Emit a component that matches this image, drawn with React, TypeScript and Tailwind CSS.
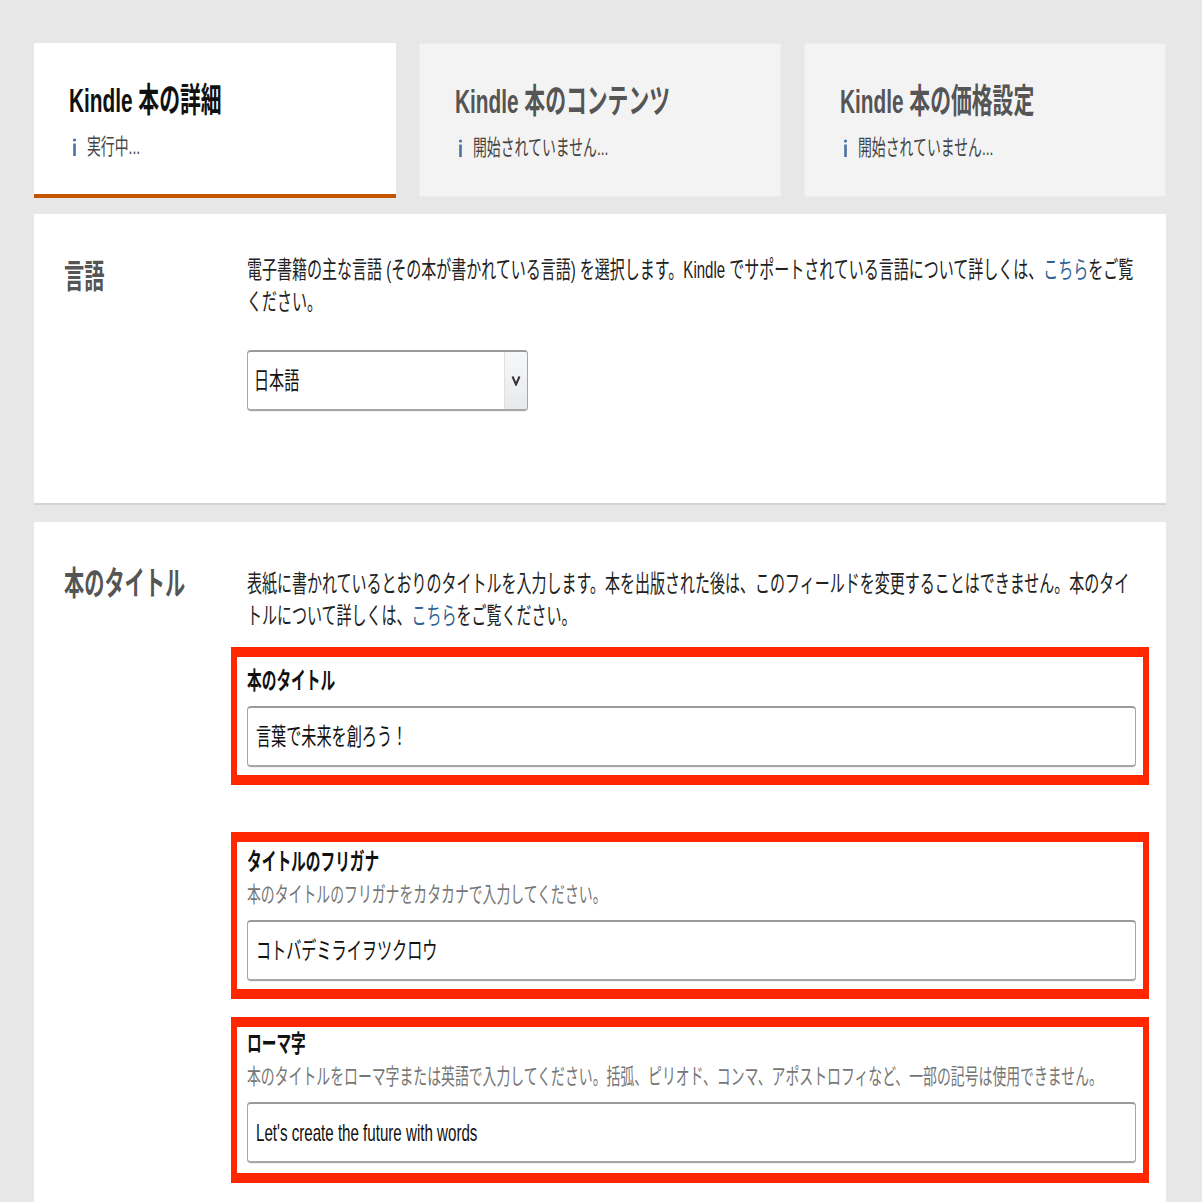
import React from "react";

// the reference is a horizontally squeezed screenshot, so text is drawn at full height and squeezed in x
function Sq({ children, className = "" }: { children: React.ReactNode; className?: string }) {
  return <div className={`origin-left scale-x-[0.625] w-[160%] ${className}`}>{children}</div>;
}

function Line({ children, className = "", bold }: { children: React.ReactNode; className?: string; bold?: boolean }) {
  const squeeze = bold ? "scale-x-[0.612]" : "scale-x-[0.63]";
  return <div className={`origin-left ${squeeze} whitespace-nowrap ${className}`}>{children}</div>;
}

function InfoIcon() {
  return (
    <svg width="5" height="18" viewBox="0 0 5 18" className="shrink-0">
      <circle cx="2.5" cy="2" r="1.6" fill="#4a72a2" />
      <rect x="1.2" y="5.5" width="2.6" height="12.5" fill="#4a72a2" />
    </svg>
  );
}

function Tab({ title, status, active }: { title: string; status: string; active?: boolean }) {
  return (
    <div
      className={
        active
          ? "h-[155px] bg-white border-b-[4px] border-[#c45500] pl-[35px] pt-[37px]"
          : "h-[154px] bg-[#f3f3f3] border border-[#ececec] pl-[35px] pt-[37px]"
      }
    >
      <Line bold className={`text-[34px] leading-[40px] font-bold ${active ? "text-[#111]" : "text-[#555]"}`}>
        {title}
      </Line>
      <div className="mt-[13px] pl-[3px] flex items-center gap-[10px]">
        <InfoIcon />
        <Line className="text-[22px] leading-[28px] text-[#444]">{status}</Line>
      </div>
    </div>
  );
}

function FieldInput({ value }: { value: string }) {
  return (
    <div className="h-[61px] rounded-[4px] border border-[#a6a6a6] border-t-2 border-b-2 border-t-[#9a9a9a] shadow-[0_1px_0_rgba(0,0,0,0.06)] pl-[8px] flex items-center bg-white">
      <Line className="text-[24px] leading-[30px] text-[#111]">{value}</Line>
    </div>
  );
}

const link = "text-[#2f6396]";

export default function App() {
  return (
    <div className="min-h-screen bg-[#e7e7e7] pl-[34px] pr-[36px] pt-[43px] font-['Liberation_Sans','Noto_Sans_CJK_JP',sans-serif] overflow-hidden">
      {/* Steps */}
      <div className="grid grid-cols-3 gap-[23px]">
        <Tab title="Kindle 本の詳細" status="実行中..." active />
        <Tab title="Kindle 本のコンテンツ" status="開始されていません..." />
        <Tab title="Kindle 本の価格設定" status="開始されていません..." />
      </div>

      {/* Language */}
      <div className="mt-[16px] h-[291px] bg-white border-b-2 border-[#d4d4d4] flex">
        <div className="w-[213px] shrink-0 pl-[30px] pt-[43px]">
          <Line bold className="text-[33px] leading-[40px] font-bold text-[#555]">言語</Line>
        </div>
        <div className="flex-1 min-w-0 pr-[30px] pt-[40px]">
          <Sq className="text-[24px] leading-[32px] text-[#222] whitespace-nowrap">
            電子書籍の主な言語 (その本が書かれている言語) を選択します。Kindle でサポートされている言語について詳しくは、
            <span className={link}>こちら</span>をご覧
            <br />
            ください。
          </Sq>
          <div className="mt-[32px] w-[281px] h-[61px] flex rounded-[4px] border border-[#a6a6a6] border-t-2 border-b-2 border-t-[#9a9a9a] shadow-[0_1px_0_rgba(0,0,0,0.06)] overflow-hidden">
            <div className="flex-1 min-w-0 pl-[6px] flex items-center">
              <Line className="text-[24px] leading-[30px] text-[#111]">日本語</Line>
            </div>
            <div className="w-[23px] bg-gradient-to-b from-[#f7f8fa] to-[#e7e9ec] border-l border-[#e0e0e0] flex items-center justify-center">
              <svg width="10" height="11" viewBox="0 0 10 11">
                <path d="M1.5 1.5 L5 9.5 L8.5 1.5" fill="none" stroke="#333" strokeWidth="2" />
              </svg>
            </div>
          </div>
        </div>
      </div>

      {/* Title */}
      <div className="mt-[17px] bg-white flex pb-[40px]">
        <div className="w-[213px] shrink-0 pl-[30px] pt-[42px]">
          <Line bold className="text-[33px] leading-[40px] font-bold text-[#555]">本のタイトル</Line>
        </div>
        <div className="flex-1 min-w-0 pr-[30px] pt-[46px]">
          <Sq className="text-[24px] leading-[32px] text-[#222] whitespace-nowrap">
            表紙に書かれているとおりのタイトルを入力します。本を出版された後は、このフィールドを変更することはできません。本のタイ
            <br />
            トルについて詳しくは、<span className={link}>こちら</span>をご覧ください。
          </Sq>

          <div className="mt-[15px] -ml-[16px] -mr-[13px] border-x-[6px] border-y-[10px] border-[#ff2600] pl-[10px] pr-[7px] pt-[9px] pb-[8px]">
            <Line bold className="text-[24px] leading-[30px] font-bold text-[#111]">本のタイトル</Line>
            <div className="mt-[10px]">
              <FieldInput value="言葉で未来を創ろう！" />
            </div>
          </div>

          <div className="mt-[47px] -ml-[16px] -mr-[13px] border-x-[6px] border-y-[10px] border-[#ff2600] pl-[10px] pr-[7px] pt-[5px] pb-[8px]">
            <Line bold className="text-[24px] leading-[30px] font-bold text-[#111]">タイトルのフリガナ</Line>
            <Line className="mt-[4px] text-[22px] leading-[28px] text-[#767676]">
              本のタイトルのフリガナをカタカナで入力してください。
            </Line>
            <div className="mt-[11px]">
              <FieldInput value="コトバデミライヲツクロウ" />
            </div>
          </div>

          <div className="mt-[18px] -ml-[16px] -mr-[13px] border-x-[6px] border-y-[10px] border-[#ff2600] pl-[10px] pr-[7px] pt-[2px] pb-[10px]">
            <Line bold className="text-[24px] leading-[30px] font-bold text-[#111]">ローマ字</Line>
            <Line className="mt-[4px] text-[22px] leading-[28px] text-[#767676]">
              本のタイトルをローマ字または英語で入力してください。括弧、ピリオド、コンマ、アポストロフィなど、一部の記号は使用できません。
            </Line>
            <div className="mt-[11px]">
              <FieldInput value="Let's create the future with words" />
            </div>
          </div>
        </div>
      </div>
    </div>
  );
}
